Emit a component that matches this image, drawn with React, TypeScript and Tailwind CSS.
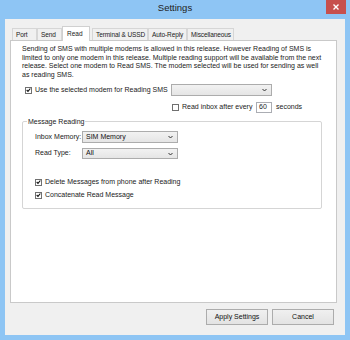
import React from "react"

const font = { fontFamily: '"Liberation Sans", Arial, sans-serif' }

const Check: React.FC<{ on?: boolean }> = ({ on }) => (
  <span className="w-[7px] h-[7px] border border-[#707070] bg-white flex items-center justify-center shrink-0">
    {on && (
      <svg width="6" height="6" viewBox="0 0 6 6">
        <path d="M0.8 3 L2.4 4.6 L5.2 1.2" stroke="#111" strokeWidth="1.3" fill="none" />
      </svg>
    )}
  </span>
)

const Chevron: React.FC = () => (
  <svg width="5" height="4" viewBox="0 0 5 4" className="shrink-0">
    <path d="M0.5 1 L2.5 3 L4.5 1" stroke="#333" strokeWidth="1" fill="none" />
  </svg>
)

const Select: React.FC<{ value?: string; className?: string }> = ({ value, className }) => (
  <div
    className={`flex items-center justify-between border border-[#acacac] bg-gradient-to-b from-[#f2f2f2] to-[#e5e5e5] pl-[3px] pr-[4px] text-[7px] text-[#111] ${className ?? ""}`}
  >
    <span>{value}</span>
    <Chevron />
  </div>
)

const tabs = ["Port", "Send", "Read", "Terminal & USSD", "Auto-Reply", "Miscellaneous"]
const tabW = ["w-[25px]", "w-[25px]", "w-[28px]", "w-[56px]", "w-[39px]", "w-[47px]"]

export default function App() {
  return (
    <div className="w-[350px] h-[340px] bg-[#8ec5f4] flex flex-col text-[#1a1a1a]" style={font}>
      {/* title bar */}
      <div className="h-[19px] relative flex items-center justify-center">
        <span className="text-[9.5px] text-[#222] mt-[-3px]">Settings</span>
        <div className="absolute right-[4px] top-0 w-[20px] h-[14px] bg-[#c7504d] flex items-center justify-center">
          <svg width="6" height="6" viewBox="0 0 6 6">
            <path d="M0.5 0.5 L5.5 5.5 M5.5 0.5 L0.5 5.5" stroke="#fff" strokeWidth="1.4" />
          </svg>
        </div>
      </div>

      {/* client */}
      <div className="mx-[5px] mb-[5px] flex-1 bg-[#f0f0f0] flex flex-col px-[5px] pt-[7px]">
        {/* tabs */}
        <div className="flex items-end h-[14px] pl-[2px]">
          {tabs.map((t, i) =>
            i === 2 ? (
              <div
                key={t}
                className={`${tabW[i]} h-[15px] bg-white border border-b-0 border-[#d0d0d0] text-[6.5px] whitespace-nowrap flex items-start pt-[2px] pl-[4px] relative z-10 -mb-px`}
              >
                {t}
              </div>
            ) : (
              <div
                key={t}
                className={`${tabW[i]} h-[12px] bg-[#f0f0f0] border border-b-0 border-[#d6d6d6] text-[6.5px] tracking-[-0.1px] whitespace-nowrap flex items-center pl-[3px] ${i === 3 ? "ml-[2px]" : ""}`}
              >
                {t}
              </div>
            )
          )}
        </div>

        {/* panel */}
        <div className="w-[327px] h-[263px] bg-white border border-[#c9c9c9] flex flex-col pl-[11px] pt-[4px]">
          <p className="text-[7px] leading-[8.5px] text-[#1a1a1a]">
            Sending of SMS with multiple modems is allowed in this release. However Reading of SMS is
            <br />
            limited to only one modem in this release. Multiple reading support will be available from the next
            <br />
            release. Select one modem to Read SMS. The modem selected will be used for sending as well
            <br />
            as reading SMS.
          </p>

          <div className="flex mt-[5px]">
            <div className="flex items-center gap-[3px] ml-[3px] h-[12px] w-[146px]">
              <Check on />
              <span className="text-[7px]">Use the selected modem for Reading SMS</span>
            </div>
            <div className="flex flex-col">
              <Select className="w-[101px] h-[12px]" />
              <div className="flex items-center mt-[6px] ml-[1px] text-[7px]">
                <Check />
                <span className="ml-[3px] w-[74px]">Read inbox after every</span>
                <div className="w-[16px] h-[11px] border border-[#abadb3] bg-white flex items-center pl-[2px]">60</div>
                <span className="ml-[4px]">seconds</span>
              </div>
            </div>
          </div>

          {/* group box */}
          <div className="relative mt-[8px] w-[300px] h-[88px] border border-[#d5d5d5] rounded-[2px] pl-[12px] pt-[9px]">
            <span className="absolute -top-[5px] left-[4px] bg-white px-[1px] text-[7px]">Message Reading</span>
            <div className="flex items-center h-[12px] text-[7px]">
              <span className="w-[47px]">Inbox Memory:</span>
              <Select value="SIM Memory" className="w-[96px] h-[12px]" />
            </div>
            <div className="flex items-center h-[11px] mt-[5px] text-[7px]">
              <span className="w-[47px]">Read Type:</span>
              <Select value="All" className="w-[96px] h-[11px]" />
            </div>
            <div className="flex items-center gap-[3px] mt-[19px] h-[8px] text-[7px]">
              <Check on />
              <span>Delete Messages from phone after Reading</span>
            </div>
            <div className="flex items-center gap-[3px] mt-[5px] h-[8px] text-[7px]">
              <Check on />
              <span>Concatenate Read Message</span>
            </div>
          </div>
        </div>

        {/* buttons */}
        <div className="flex justify-end gap-[4px] mt-[6px] pr-[6px]">
          <button className="w-[62px] h-[16px] border border-[#acacac] bg-gradient-to-b from-[#f0f0f0] to-[#e3e3e3] text-[7px] text-[#111]">
            Apply Settings
          </button>
          <button className="w-[62px] h-[16px] border border-[#acacac] bg-gradient-to-b from-[#f0f0f0] to-[#e3e3e3] text-[7px] text-[#111]">
            Cancel
          </button>
        </div>
      </div>
    </div>
  )
}
